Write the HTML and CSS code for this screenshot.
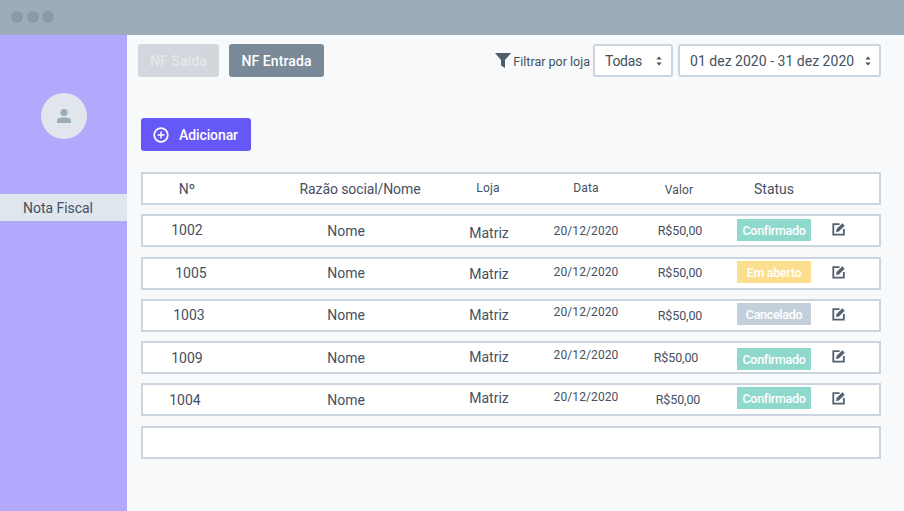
FILE: index.html
```html
<!DOCTYPE html>
<html lang="pt-BR">
<head>
<meta charset="utf-8">
<title>Nota Fiscal</title>
<link rel="stylesheet" href="styles.css">
</head>
<body>
<svg class="defs" width="0" height="0" aria-hidden="true">
  <symbol id="edit" viewBox="0 0 13 13">
    <path d="M7 2H1.2v9.8H11V6.5" fill="none" stroke="currentColor" stroke-width="1.7"/>
    <path d="M4.2 6.6 9.6 1.2l2.2 2.2-5.4 5.4-2.6.5z" fill="currentColor"/>
  </symbol>
  <symbol id="updown" viewBox="0 0 6 10">
    <path d="M3 .6 5.6 3.6H.4zM3 9.4.4 6.4h5.2z" fill="currentColor"/>
  </symbol>
</svg>
<header class="titlebar">
  <span class="dot"></span><span class="dot"></span><span class="dot"></span>
</header>
<div class="app">
  <aside class="sidebar">
    <div class="avatar">
      <svg width="16" height="16" viewBox="0 0 16 16"><circle cx="8" cy="4.4" r="3.5" fill="#9cacb8"/><path d="M1 15v-2.4C1 10.4 3 9.4 8 9.4s7 1 7 3.2V15z" fill="#9cacb8"/></svg>
    </div>
    <div class="nav-item">Nota Fiscal</div>
  </aside>
  <main class="main">
    <div class="toolbar">
      <button class="tab tab-off">NF Saída</button>
      <button class="tab tab-on">NF Entrada</button>
      <div class="filters">
        <svg class="funnel" width="16" height="15" viewBox="0 0 16 15"><path d="M0 0h16L10 7v8L6 12.4V7z" fill="#4f5d6b"/></svg>
        <span class="filter-label">Filtrar por loja</span>
        <div class="select select-store">Todas<svg class="arrows"><use href="#updown"/></svg></div>
        <div class="select select-date">01 dez 2020 - 31 dez 2020<svg class="arrows"><use href="#updown"/></svg></div>
      </div>
    </div>
    <button class="add">
      <svg width="16" height="16" viewBox="0 0 16 16"><circle cx="8" cy="8" r="6.8" fill="none" stroke="#fff" stroke-width="1.7"/><path d="M8 4.6v6.8M4.6 8h6.8" stroke="#fff" stroke-width="1.5"/></svg>
      Adicionar
    </button>
    <div class="table">
      <div class="row head">
        <span class="c-no">Nº</span>
        <span class="c-name r15">Razão social/Nome</span>
        <span class="c-store small l1 u1">Loja</span>
        <span class="small u1">Data</span>
        <span class="small dn1 l1">Valor</span>
        <span class="status-head">Status</span>
        <span></span>
      </div>
      <div class="row">
        <span class="c-no u1">1002</span><span class="c-name">Nome</span><span class="dn2">Matriz</span><span class="date">20/12/2020</span><span class="value">R$50,00</span><span class="badge ok u1">Confirmado</span><svg class="edit"><use href="#edit"/></svg>
      </div>
      <div class="row">
        <span class="c-no r4">1005</span><span class="c-name">Nome</span><span class="dn1">Matriz</span><span class="date u1">20/12/2020</span><span class="value u1">R$50,00</span><span class="badge open u1">Em aberto</span><svg class="edit"><use href="#edit"/></svg>
      </div>
      <div class="row">
        <span class="c-no r2">1003</span><span class="c-name">Nome</span><span>Matriz</span><span class="date u3">20/12/2020</span><span class="value">R$50,00</span><span class="badge cancel u1">Cancelado</span><svg class="edit"><use href="#edit"/></svg>
      </div>
      <div class="row">
        <span class="c-no">1009</span><span class="c-name">Nome</span><span class="u1">Matriz</span><span class="date u3">20/12/2020</span><span class="value l4">R$50,00</span><span class="badge ok dn1">Confirmado</span><svg class="edit"><use href="#edit"/></svg>
      </div>
      <div class="row">
        <span class="c-no l2">1004</span><span class="c-name">Nome</span><span class="u2">Matriz</span><span class="date u3">20/12/2020</span><span class="value l2">R$50,00</span><span class="badge ok u2">Confirmado</span><svg class="edit"><use href="#edit"/></svg>
      </div>
      <div class="row"></div>
    </div>
  </main>
</div>
</body>
</html>
```
FILE: styles.css
```css
* { box-sizing: border-box; }
html, body { margin: 0; height: 100%; }
body {
  width: 904px;
  height: 511px;
  overflow: hidden;
  display: flex;
  flex-direction: column;
  font-family: Roboto, "Liberation Sans", sans-serif;
  font-size: 14px;
  color: #44515f;
  background: #f8f9fb;
}
.defs { position: absolute; }

.titlebar {
  flex: 0 0 35px;
  display: flex;
  align-items: center;
  gap: 3.5px;
  padding: 0 0 1px 11px;
  background: #9cacb8;
}
.dot { width: 12px; height: 12px; border-radius: 50%; background: #8a9ba8; }

.app { flex: 1; display: flex; min-height: 0; }

.sidebar { flex: 0 0 127px; background: #b0a9fc; display: flex; flex-direction: column; align-items: center; }
.avatar {
  width: 46px; height: 46px; margin-top: 58px; border-radius: 50%;
  background: #e0e6ec; display: flex; align-items: center; justify-content: center;
}
.nav-item {
  width: 100%; height: 27px; margin-top: 55px; padding: 1px 11px 0 0;
  background: #e0e6ee; font-size: 14px; letter-spacing: -.05px; line-height: 27px; text-align: center; color: #44515f;
}

.main { flex: 1; padding: 9px 23px 0 11px; min-width: 0; }

.toolbar { display: flex; align-items: center; height: 33px; }
button { font-family: inherit; border: 0; }
.tab { height: 33px; border-radius: 3px; font-size: 14px; font-weight: 500; letter-spacing: .1px; color: #fff; padding: 0; }
.tab-off { width: 81px; background: #d1d7dc; color: #e3e7ea; }
.tab-on { width: 95px; margin-left: 10px; background: #798998; }

.filters { margin-left: auto; display: flex; align-items: center; }
.funnel { margin-right: 2px; }
.filter-label { font-size: 12.5px; letter-spacing: 0; margin-right: 3px; padding-top: 2px; white-space: nowrap; }
.select {
  height: 33px; background: #fff; border: 2px solid #cbd5e0; border-radius: 3px;
  display: flex; align-items: center; justify-content: space-between;
  font-size: 14px; white-space: nowrap; color: #44515f;
}
.select-store { width: 80px; padding: 0 9px 0 10px; letter-spacing: -.3px; }
.select-date { width: 203px; margin-left: 5px; padding: 0 8px 0 10px; letter-spacing: .02px; }
.arrows { width: 6px; height: 10px; color: #44515f; }

.add {
  display: flex; align-items: center; gap: 10px;
  width: 110px; height: 33px; margin: 41px 0 0 3px; padding: 0 0 0 12px;
  background: #6658f7; border-radius: 3px;
  color: #fff; font-size: 14px; font-weight: 500; letter-spacing: -.1px;
}

.table { margin: 21px 0 0 3px; width: 740px; display: flex; flex-direction: column; gap: 9.3px; }
.row {
  height: 33px;
  display: grid;
  grid-template-columns: 106px 192px 96px 98px 90px 98px 1fr;
  align-items: center;
  justify-items: center;
  background: #fff;
  border: 2px solid #cbd5e0;
}
.c-no { margin-right: 18px; }
.c-name { margin-left: 2px; }
.head .c-name { letter-spacing: -.1px; }
.small { font-size: 12px; letter-spacing: .15px; }
.date { font-size: 12px; letter-spacing: .1px; }
.value { font-size: 12.5px; letter-spacing: -.1px; }
.status-head { letter-spacing: 0; }

.badge {
  width: 74px; height: 22px; display: flex; align-items: center; justify-content: center;
  color: #fff; font-size: 12.5px; font-weight: 500; letter-spacing: -.3px; padding-top: 1px;
}
.ok { background: #8fd8cc; }
.open { background: #fbdf8f; }
.cancel { background: #c3cfda; }

.edit { width: 14px; height: 14px; justify-self: start; margin-left: 9px; margin-bottom: 3px; color: #54616e; }

/* per-cell drift */
.u1 { margin-bottom: 2px; }
.u2 { margin-bottom: 4px; }
.u3 { margin-bottom: 6px; }
.dn1 { margin-top: 2px; }
.dn2 { margin-top: 4px; }
.r2 { margin-left: -14px; margin-right: 0; }
.r4 { margin-left: -10px; margin-right: 0; }
.r15 { margin-left: 30px; }
.l1 { margin-left: -2px; }
.l2 { margin-right: 4px; }
.l4 { margin-right: 8px; }
.c-no.l2 { margin-right: 22px; }
```
